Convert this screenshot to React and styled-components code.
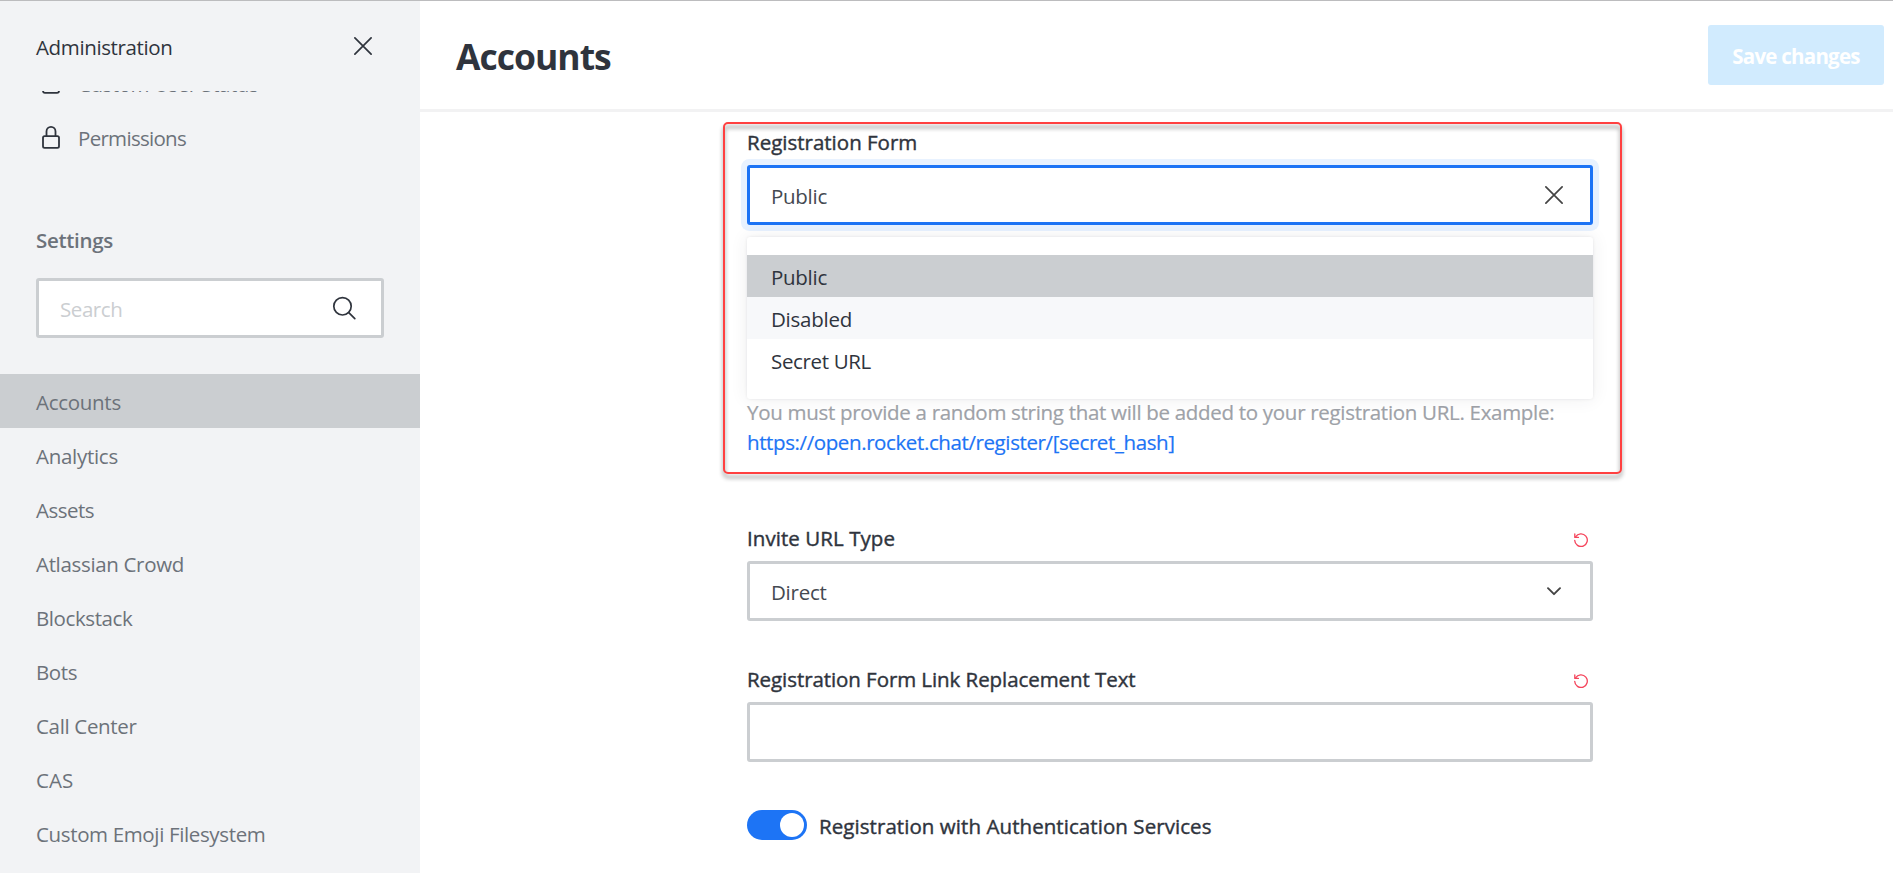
import React from 'react';
import styled, { createGlobalStyle, css } from 'styled-components';

const GlobalStyle = createGlobalStyle`
  *, *::before, *::after { box-sizing: border-box; }
  body {
    margin: 0;
    background: #fff;
    color: #2f343d;
    font-family: "Open Sans", "Noto Sans", sans-serif;
    font-size: 20.5px;
    line-height: 30px;
    overflow: hidden;
  }
`;

/* Text run with its own tracking */
const Text = styled.span`
  letter-spacing: ${({ $track = 0 }) => $track}px;
  white-space: nowrap;
`;

const Page = styled.div`
  display: flex;
  height: 873px;
  border-top: 1px solid #bcbcbe;
`;

const Sidebar = styled.aside`
  flex: none;
  display: flex;
  flex-direction: column;
  width: 420px;
  background: #f2f3f5;
  overflow: hidden;
`;

const SidebarHeader = styled.header`
  flex: none;
  display: flex;
  align-items: center;
  justify-content: space-between;
  height: 90px;
  padding: 0 48px 0 36px;
`;

const SidebarTitle = styled(Text)`
  padding-top: 2px;
`;

const SidebarScroll = styled.div`
  flex: 1;
  min-height: 0;
  overflow: hidden;
`;

const AdminNav = styled.nav`
  margin-top: -35px;
`;

const NavItem = styled.a`
  display: flex;
  align-items: center;
  gap: 18px;
  height: 54px;
  padding: 2px 36px 0;
  color: #6c727a;
  background: ${({ $active }) => ($active ? '#cbced1' : 'transparent')};
`;

const NavIcon = styled.svg`
  flex: none;
  width: 24px;
  height: 24px;
  margin: 0 -3px 2px 3px;
  fill: none;
  stroke: #2f343d;
  stroke-width: 1.8;
`;

const SectionTitle = styled.h3`
  margin: 61px 36px 0;
  font-size: inherit;
  font-weight: 600;
  color: #6c727a;
`;

const boxBase = css`
  display: flex;
  align-items: center;
  justify-content: space-between;
  height: 60px;
  border: 3px solid #cbced1;
  border-radius: 3px;
  background: #fff;
`;

const SearchBox = styled.div`
  ${boxBase}
  margin: 23px 36px 36px;
  padding: 0 25px 0 21px;
  color: #cbced1;
`;

const Placeholder = styled(Text)`
  padding-top: 2px;
`;

const Main = styled.main`
  flex: 1;
  min-width: 0;
  display: flex;
  flex-direction: column;
`;

const PageHeader = styled.header`
  flex: none;
  display: flex;
  align-items: center;
  justify-content: space-between;
  height: 111px;
  padding: 0 9px 0 36px;
  border-bottom: 3px solid #f2f2f3;
`;

const Title = styled.h1`
  margin: 0;
  padding-top: 2px;
  font-size: 35.5px;
  line-height: 48px;
  font-weight: 700;
  letter-spacing: -1px;
`;

const SaveButton = styled.button`
  width: 176px;
  height: 60px;
  padding: 2px 0 0;
  border: 0;
  border-radius: 3px;
  background: #d1ebfe;
  color: #fff;
  font: inherit;
  font-weight: 700;
`;

const Form = styled.form`
  width: 846px;
  margin: 0 0 0 327px;
  padding-top: 15px;
`;

const Field = styled.section`
  position: relative;
  margin-bottom: ${({ $gap = 43 }) => $gap}px;
`;

/* Medium weight: regular face thickened by a hairline stroke */
const mediumWeight = css`
  -webkit-text-stroke: 0.4px currentColor;
`;

const LabelRow = styled.div`
  display: flex;
  align-items: center;
  justify-content: space-between;
  height: 30px;
  margin-bottom: 8px;
  padding-right: 5px;
  ${mediumWeight}
`;

const ControlAnchor = styled.div`
  position: relative;
`;

const Control = styled.div`
  ${boxBase}
  padding: 0 ${({ $end = 27 }) => $end}px 0 21px;
  ${({ $focused }) =>
    $focused &&
    css`
      border-color: #1d74f5;
      box-shadow: 0 0 0 6px #e8f2ff;
    `}
`;

const ControlValue = styled(Text)`
  padding-top: 2px;
  color: #444951;
`;

const OptionList = styled.ul`
  position: absolute;
  top: 72px;
  left: 0;
  right: 0;
  margin: 0;
  padding: 18px 0;
  list-style: none;
  background: #fff;
  border-radius: 3px;
  box-shadow: 0 0 3px rgba(47, 52, 61, 0.1), 0 0 18px rgba(47, 52, 61, 0.08);
`;

const optionFill = { selected: '#cbced1', hovered: '#f7f8fa' };

const Option = styled.li`
  height: 42px;
  padding: 7px 24px 0;
  background: ${({ $state }) => optionFill[$state] || 'transparent'};
`;

const Hint = styled.p`
  margin: 172px 0 0;
  color: #9ea2a8;
  -webkit-text-stroke: 0.2px currentColor;
`;

const HintLink = styled.a`
  display: block;
  color: #1d74f5;
`;

const Highlight = styled.div`
  position: absolute;
  top: -5px;
  right: -29px;
  bottom: -17px;
  left: -24px;
  border: 2px solid #ff4040;
  border-radius: 5px;
  filter: drop-shadow(0 4px 2px rgba(0, 0, 0, 0.45));
  pointer-events: none;
`;

const ToggleRow = styled.div`
  display: flex;
  align-items: center;
  gap: 12px;
  height: 30px;
  margin-top: 48px;
  ${mediumWeight}
`;

const Toggle = styled.span`
  display: flex;
  justify-content: flex-end;
  width: 60px;
  height: 30px;
  padding: 3px;
  border-radius: 15px;
  background: #1d74f5;

  &::after {
    content: '';
    width: 24px;
    height: 24px;
    border-radius: 50%;
    background: #fff;
  }
`;

const ToggleLabel = styled(Text)`
  padding-top: 2px;
`;

const Glyph = styled.svg`
  flex: none;
  display: block;
  fill: none;
  stroke: ${({ $color = '#2f343d' }) => $color};
`;

const ResetGlyph = styled(Glyph)`
  margin-top: 4px;
`;

const CrossIcon = ({ color }) => (
  <Glyph width="18" height="18" viewBox="0 0 18 18" strokeWidth="1.7" strokeLinecap="round" $color={color}>
    <path d="M.9.9l16.2 16.2M17.1.9L.9 17.1" />
  </Glyph>
);

const SearchIcon = () => (
  <Glyph width="24" height="24" viewBox="0 0 24 24" strokeWidth="1.7" strokeLinecap="round">
    <circle cx="10.5" cy="10.3" r="8.7" />
    <path d="M16.8 16.6l6 6" />
  </Glyph>
);

const ChevronIcon = () => (
  <Glyph width="14" height="9" viewBox="0 0 14 9" strokeWidth="1.9" strokeLinecap="round" strokeLinejoin="round" $color="#444">
    <path d="M1 1.2l6 6 6-6" />
  </Glyph>
);

const ResetIcon = () => (
  <ResetGlyph width="14" height="14" viewBox="0 0 14 14" strokeWidth="1.3" strokeLinecap="round" strokeLinejoin="round" $color="#f5455c">
    <path d="M.7 7.3A6.3 6.3 0 1 0 1.6 3.9" />
    <path d="M.8.9v3.5h3.6" />
  </ResetGlyph>
);

const UserIcon = () => (
  <NavIcon viewBox="0 0 24 24">
    <circle cx="12" cy="6" r="4" />
    <path d="M4 15.5c0-2 2-3 4-3h8c2 0 4 1 4 3V19.8q0 2-2 2H6q-2 0-2-2z" />
  </NavIcon>
);

const LockIcon = () => (
  <NavIcon viewBox="0 0 24 24">
    <rect x="4" y="11.2" width="16" height="11.6" rx="1.6" />
    <path d="M7.5 11V6.4a4.5 4.5 0 0 1 9 0V11" />
  </NavIcon>
);

const groups = [
  ['Accounts', -0.284],
  ['Analytics', -0.284],
  ['Assets', -0.5],
  ['Atlassian Crowd', -0.332],
  ['Blockstack', -0.4],
  ['Bots', -0.4],
  ['Call Center', -0.329],
  ['CAS', 0],
  ['Custom Emoji Filesystem', -0.357],
];

const options = [
  ['Public', -0.28, 'selected'],
  ['Disabled', -0.25, 'hovered'],
  ['Secret URL', -0.35],
];

export default function App() {
  return (
    <>
      <GlobalStyle />
      <Page>
        <Sidebar>
          <SidebarHeader>
            <SidebarTitle $track={-0.367}>Administration</SidebarTitle>
            <CrossIcon />
          </SidebarHeader>
          <SidebarScroll>
            <AdminNav>
              <NavItem>
                <UserIcon />
                <Text $track={-0.47}>Custom User Status</Text>
              </NavItem>
              <NavItem>
                <LockIcon />
                <Text $track={-0.7}>Permissions</Text>
              </NavItem>
            </AdminNav>
            <SectionTitle>
              <Text $track={-0.3}>Settings</Text>
            </SectionTitle>
            <SearchBox>
              <Placeholder $track={-0.428}>Search</Placeholder>
              <SearchIcon />
            </SearchBox>
            <nav>
              {groups.map(([name, track], i) => (
                <NavItem key={name} $active={i === 0}>
                  <Text $track={track}>{name}</Text>
                </NavItem>
              ))}
            </nav>
          </SidebarScroll>
        </Sidebar>

        <Main>
          <PageHeader>
            <Title>Accounts</Title>
            <SaveButton type="button">
              <Text $track={-0.75}>Save changes</Text>
            </SaveButton>
          </PageHeader>

          <Form>
            <Field $gap={66}>
              <LabelRow>
                <Text $track={0}>Registration Form</Text>
              </LabelRow>
              <ControlAnchor>
                <Control $focused>
                  <ControlValue $track={-0.28}>Public</ControlValue>
                  <CrossIcon color="#444" />
                </Control>
                <OptionList>
                  {options.map(([name, track, state]) => (
                    <Option key={name} $state={state}>
                      <Text $track={track}>{name}</Text>
                    </Option>
                  ))}
                </OptionList>
              </ControlAnchor>
              <Hint>
                <Text $track={-0.301}>
                  You must provide a random string that will be added to your registration URL. Example:
                </Text>
                <HintLink>
                  <Text $track={-0.394}>https://open.rocket.chat/register/[secret_hash]</Text>
                </HintLink>
              </Hint>
              <Highlight />
            </Field>

            <Field>
              <LabelRow>
                <Text $track={0.06}>Invite URL Type</Text>
                <ResetIcon />
              </LabelRow>
              <Control $end={29}>
                <ControlValue $track={-0.252}>Direct</ControlValue>
                <ChevronIcon />
              </Control>
            </Field>

            <Field>
              <LabelRow>
                <Text $track={-0.07}>Registration Form Link Replacement Text</Text>
                <ResetIcon />
              </LabelRow>
              <Control />
            </Field>

            <ToggleRow>
              <Toggle />
              <ToggleLabel $track={0.065}>Registration with Authentication Services</ToggleLabel>
            </ToggleRow>
          </Form>
        </Main>
      </Page>
    </>
  );
}
